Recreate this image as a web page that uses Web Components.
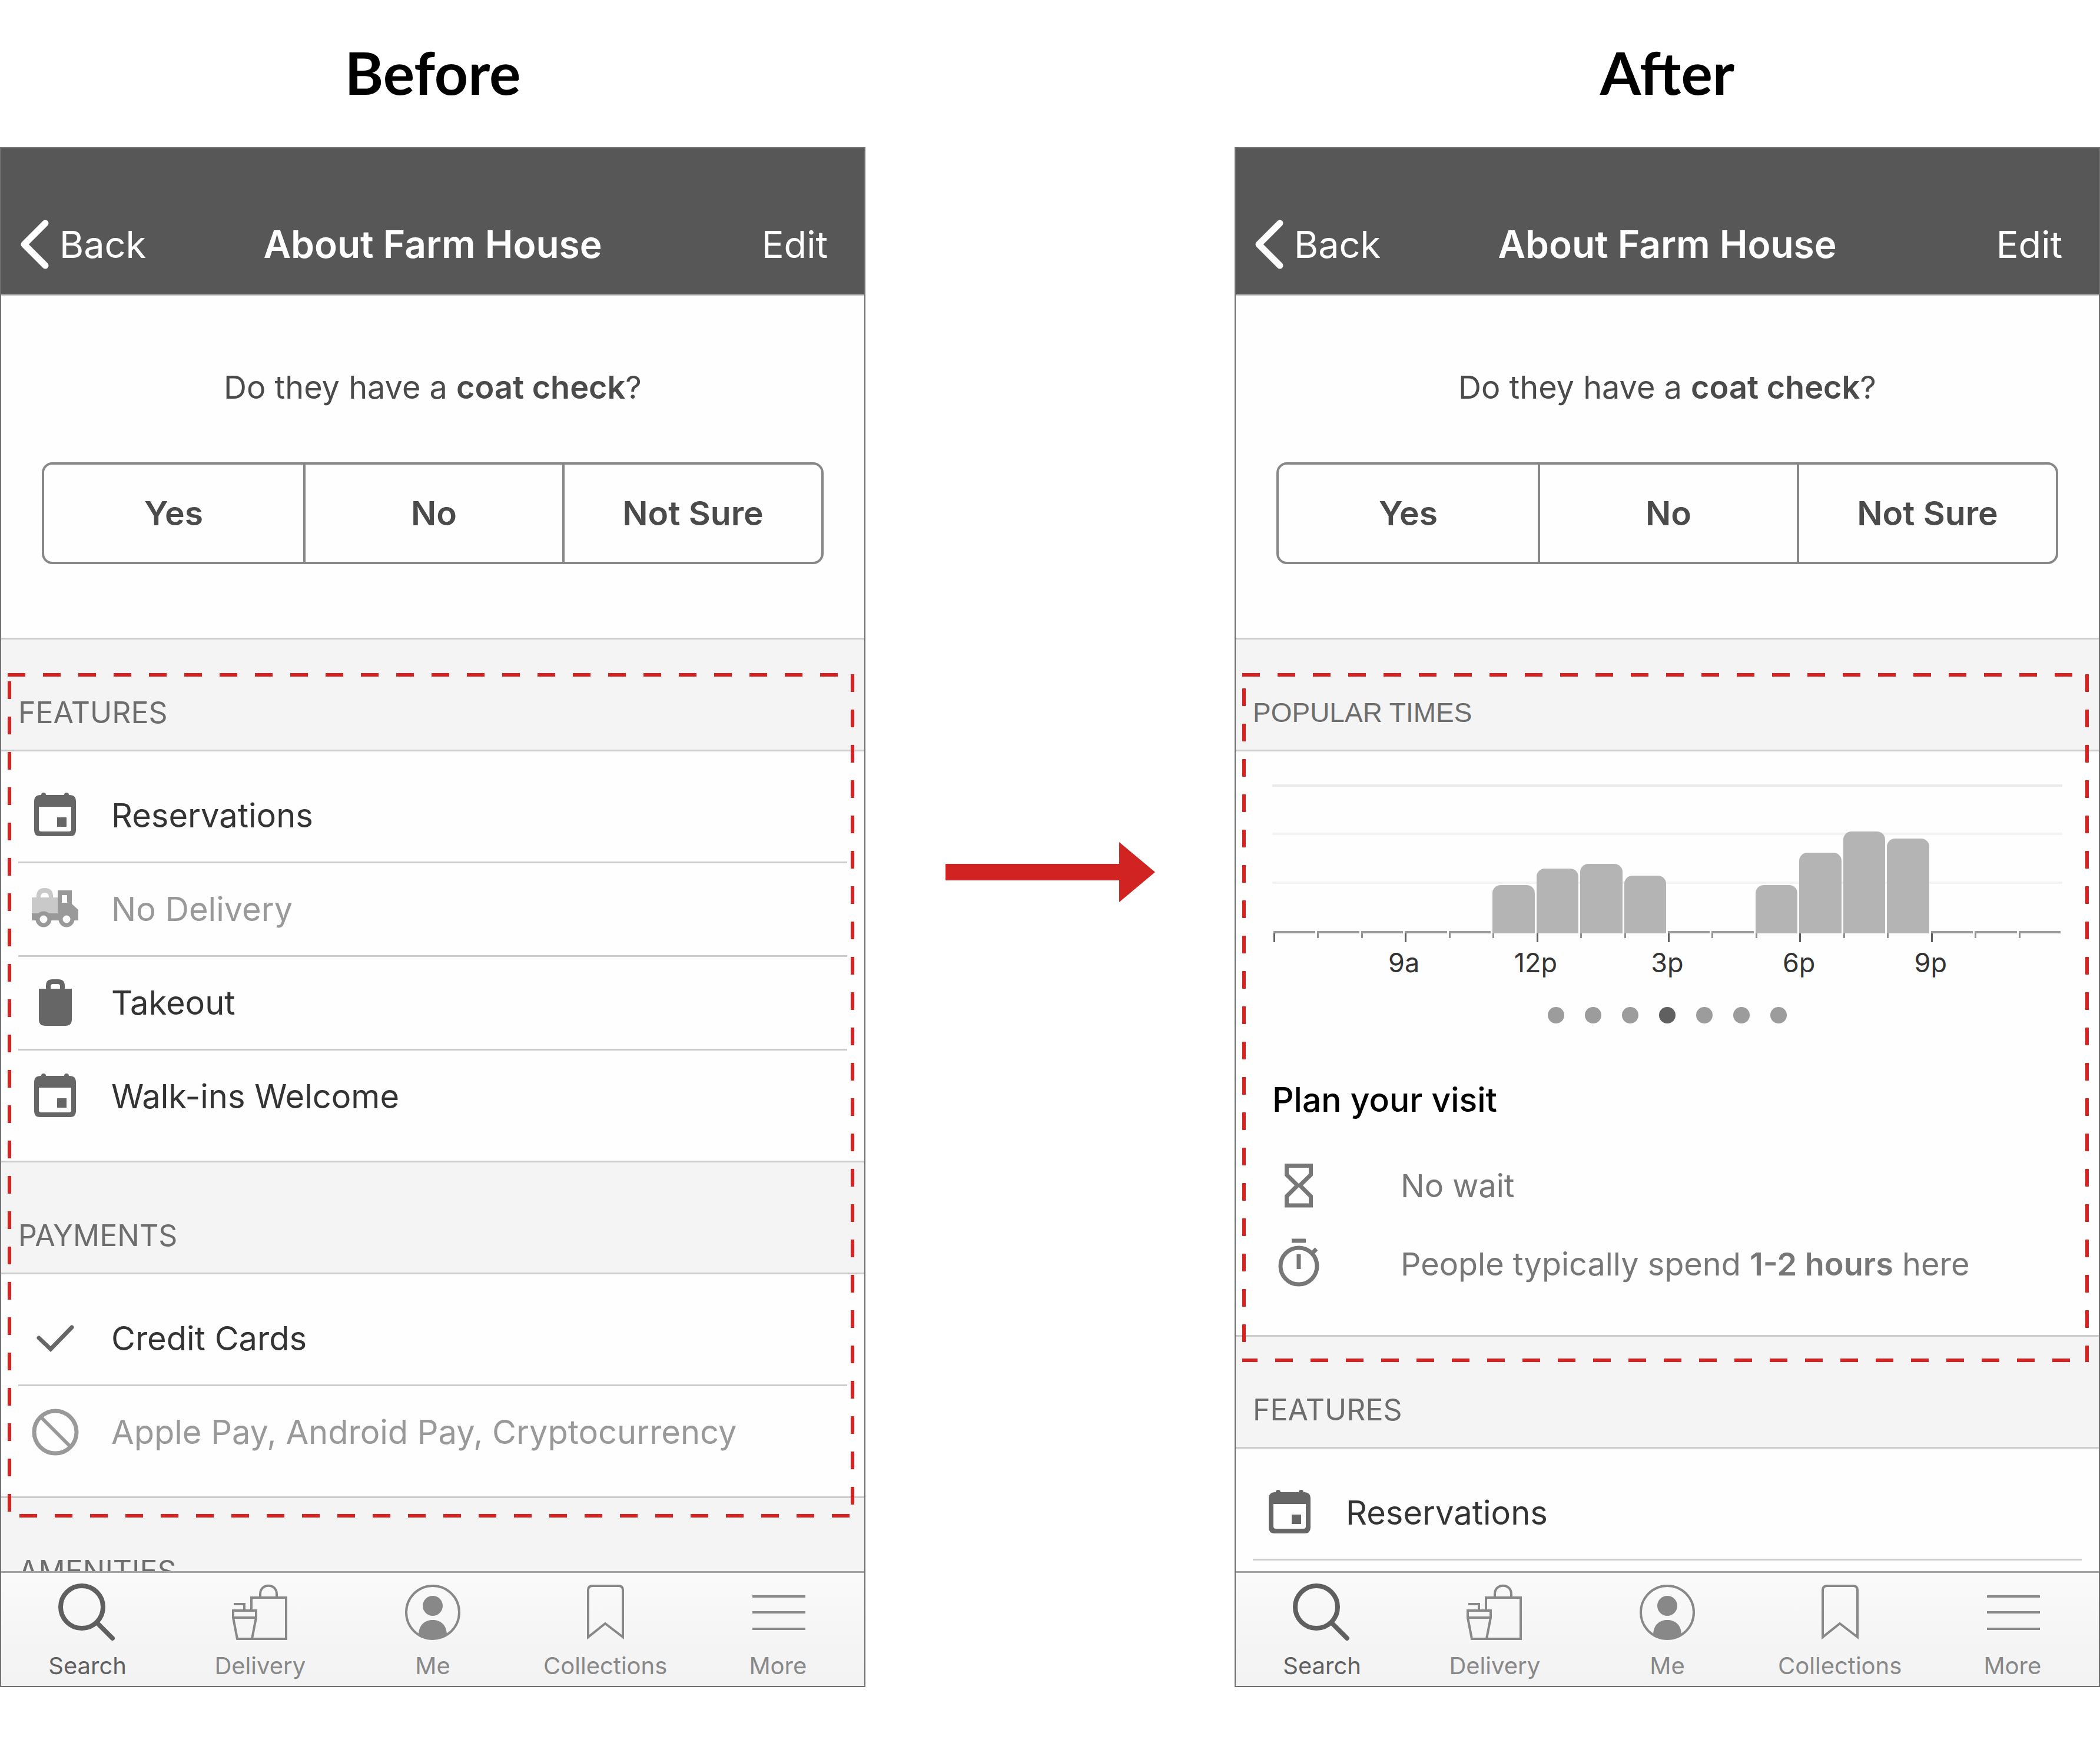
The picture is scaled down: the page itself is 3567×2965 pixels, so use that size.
<!DOCTYPE html>
<html lang="en">
<head>
<meta charset="utf-8">
<title>About Farm House: before and after</title>
<style>
body { margin: 0; background: #fff; font-family: Inter, "Liberation Sans", sans-serif; }
</style>
</head>
<body>
<compare-board>
  <phone-panel heading="Before">
    <marked-region class="tall">
      <list-section heading="FEATURES">
        <feature-row icon="calendar">Reservations</feature-row>
        <feature-row icon="truck" off>No Delivery</feature-row>
        <feature-row icon="bag">Takeout</feature-row>
        <feature-row icon="calendar">Walk-ins Welcome</feature-row>
      </list-section>
      <list-section heading="PAYMENTS">
        <feature-row icon="check">Credit Cards</feature-row>
        <feature-row icon="ban" off>Apple Pay, Android Pay, Cryptocurrency</feature-row>
      </list-section>
    </marked-region>
    <list-section heading="AMENITIES"></list-section>
  </phone-panel>
  <flow-arrow></flow-arrow>
  <phone-panel heading="After">
    <marked-region class="short">
      <list-section heading="POPULAR TIMES" class="plain">
        <popular-times></popular-times>
        <visit-plan></visit-plan>
      </list-section>
    </marked-region>
    <list-section heading="FEATURES">
      <feature-row icon="calendar">Reservations</feature-row>
      <feature-row icon="truck" off>No Delivery</feature-row>
    </list-section>
  </phone-panel>
</compare-board>

<script>
const define = (name, html, setup) => {
  const template = document.createElement('template');
  template.innerHTML = html;
  customElements.define(name, class extends HTMLElement {
    constructor() {
      super();
      this.attachShadow({ mode: 'open' }).append(template.content.cloneNode(true));
    }
    connectedCallback() { if (setup) setup(this, this.shadowRoot); }
  });
};

const icons = {
  calendar: `<g fill="#666"><circle cx="20" cy="5" r="4"/><circle cx="59" cy="5" r="4"/><path fill-rule="evenodd" d="M15 5H64Q75 5 75 16V65Q75 75 65 75H14Q4 75 4 65V16Q4 5 15 5ZM12 25V63Q12 67 16 67H63Q67 67 67 63V25ZM43 43H59V59H43Z"/></g>`,
  truck: `<path fill="#c9c9c9" fill-rule="evenodd" d="M0 20H8V18Q8 4 22 4T36 18V20H44V47H0ZM15 20H29Q29 12 22 12T15 20Z"/><path fill="#999" fill-rule="evenodd" d="M44 8H68V31L79 41V59H0V47H44ZM51 16V29H60V16Z"/><g fill="#fff" stroke="#999" stroke-width="7"><circle cx="20" cy="57" r="10"/><circle cx="59" cy="57" r="10"/></g>`,
  bag: `<path fill="#666" fill-rule="evenodd" d="M12 16H24V11Q24 0 35 0H45Q56 0 56 11V16H68V68Q68 79 57 79H23Q12 79 12 68ZM32 16H48V12Q48 8 44 8H36Q32 8 32 12Z"/>`,
  check: `<path fill="none" stroke="#666" stroke-width="7" stroke-linecap="round" d="M12 39L32 58L68 21"/>`,
  ban: `<g fill="none" stroke="#999" stroke-width="7"><circle cx="40" cy="40" r="36"/><path stroke-width="6" d="M16 15L65 64"/></g>`
};

define('compare-board', `
  <style>
    :host { display: grid; grid-template-columns: minmax(0, 1fr) 627px minmax(0, 1fr); }
  </style>
  <slot></slot>`);

define('flow-arrow', `
  <style>
    :host { display: flex; justify-content: center; padding-top: 1430px; }
    svg { width: 356px; height: 102px; }
  </style>
  <svg viewBox="0 0 356 102" aria-hidden="true"><path fill="#d22323" d="M0 37H295V0L356 51L295 102V65H0Z"/></svg>`);

define('phone-panel', `
  <style>
    :host { display: block; }
    h2 { margin: 0; height: 250px; text-align: center; font: 700 100px/244px Lato, sans-serif; color: #000; }
    .screen { box-sizing: border-box; aspect-ratio: 1470 / 2615; border: 2px solid #6f6f72; display: flex; flex-direction: column; background: #fefefe; }
    .content { flex: 1; min-height: 0; overflow: hidden; }
  </style>
  <h2></h2>
  <section class="screen">
    <nav-header></nav-header>
    <div class="content"><coat-question></coat-question><slot></slot></div>
    <tab-bar></tab-bar>
  </section>`, (host, root) => { root.querySelector('h2').textContent = host.getAttribute('heading'); });

define('nav-header', `
  <style>
    :host { display: grid; grid-template-columns: 1fr auto 1fr; align-items: center; box-sizing: border-box; height: 250px; padding: 78px 31px 0; background: #575757; border-bottom: 2px solid #c4c4c4; color: #fff; }
    h1 { margin: 0; font-size: 64px; font-weight: 600; line-height: 76px; }
    button { border: 0; padding: 0; background: none; color: inherit; font: 400 63px/76px Inter, sans-serif; display: flex; align-items: center; gap: 16px; }
    button:last-child { justify-self: end; padding-right: 31px; }
    svg { width: 52px; height: 86px; }
  </style>
  <button type="button"><svg viewBox="0 0 52 86" aria-hidden="true"><path fill="none" stroke="#fff" stroke-width="11" stroke-linecap="round" stroke-linejoin="round" d="M44 7L8 43L44 79"/></svg>Back</button>
  <h1>About Farm House</h1>
  <button type="button">Edit</button>`);

define('coat-question', `
  <style>
    :host { display: block; padding: 123px 69px 125px; color: #4a4a4a; }
    p { margin: 0 0 94px; font-size: 54px; line-height: 66px; text-align: center; }
    b { font-weight: 600; }
    .choices { display: grid; grid-template-columns: repeat(3, 1fr); box-sizing: border-box; height: 173px; border: 4px solid #878787; border-radius: 18px; }
    button { border: 0; padding: 0; background: none; color: inherit; font: 600 57px/68px Inter, sans-serif; }
    button + button { border-left: 4px solid #878787; }
  </style>
  <p>Do they have a <b>coat check</b>?</p>
  <div class="choices"><button type="button">Yes</button><button type="button">No</button><button type="button">Not Sure</button></div>`);

define('marked-region', `
  <style>
    :host { display: block; position: relative; --red: #d62322; }
    .frame { position: absolute; z-index: 1; pointer-events: none; top: 60px; left: 11px; right: 17px; bottom: var(--below);
      --h: repeating-linear-gradient(90deg, var(--red) 0 30px, transparent 30px 60px);
      --v: repeating-linear-gradient(var(--red) 0 30px, transparent 30px 60px);
      background: var(--h) 0 0 / 100% 6px, var(--h) var(--bx) 100% / 1440px 6px, var(--v) 0 var(--ly) / 6px 1500px, var(--v) 100% 2px / 6px 100%;
      background-repeat: no-repeat; }
    :host(.tall) { --below: -36px; --bx: 20px; --ly: 14px; }
    :host(.short) { --below: -46px; --bx: -4px; --ly: 26px; }
  </style>
  <slot></slot><div class="frame"></div>`);

define('list-section', `
  <style>
    :host { display: block; }
    h3 { margin: 0; padding: 94px 29px 33px; font-size: 50px; font-weight: 400; line-height: 60px; color: #6d6d6d; background: #f4f4f4; border: solid #ccc; border-width: 3px 0; }
    :host(.plain) h3 { font-family: "Liberation Sans", sans-serif; font-size: 46px; }
    .rows { padding: 31px 29px; }
    :host(.plain) .rows { padding: 56px 62px 54px; }
  </style>
  <h3></h3><div class="rows"><slot></slot></div>`, (host, root) => { root.querySelector('h3').textContent = host.getAttribute('heading'); });

define('feature-row', `
  <style>
    :host { display: flex; align-items: center; gap: 55px; height: 156px; padding-left: 23px; border-bottom: 3px solid #ccc; color: #333; font-size: 56px; line-height: 68px; }
    :host([off]) { color: #999; }
    :host(:last-child) { border-bottom: 0; }
    svg { width: 80px; height: 80px; }
  </style>
  <svg viewBox="0 0 80 80" aria-hidden="true"></svg><span><slot></slot></span>`, (host, root) => { root.querySelector('svg').innerHTML = icons[host.getAttribute('icon')]; });

define('popular-times', `
  <style>
    :host { display: block; }
    .plot, .ticks, .labels { display: grid; grid-template-columns: repeat(18, 1fr); }
    .plot, .ticks { padding-left: 2px; }
    .plot { height: 253px; align-items: end; background: linear-gradient(#ebebeb 0 0) 0 0 / 100% 4px no-repeat, linear-gradient(#f3f3f3 0 0) 0 82px / 100% 4px no-repeat, linear-gradient(#f3f3f3 0 0) 0 165px / 100% 4px no-repeat; }
    .plot i { height: 4px; margin-right: 3px; background: #9c9c9c; }
    .plot i.bar { background: #b4b4b4; border-radius: 14px 14px 0 0; }
    .ticks { height: 15px; }
    .ticks i { width: 3px; height: 8px; background: #909090; }
    .ticks i:nth-child(3n+1) { height: 15px; background: #606060; }
    .labels { margin-top: 10px; font-size: 45px; line-height: 50px; color: #333; }
    .labels span { grid-row: 1; text-align: center; }
    .dots { display: flex; justify-content: center; gap: 35px; margin-top: 50px; }
    .dots button { width: 28px; height: 28px; padding: 0; border: 0; border-radius: 50%; background: #9c9c9c; }
    .dots button[aria-current] { background: #606060; }
  </style>
  <div class="plot"></div><div class="ticks"></div><div class="labels"></div><div class="dots"></div>`, (host, root) => {
  const heights = [0, 0, 0, 0, 0, 82, 110, 118, 98, 0, 0, 82, 137, 173, 161, 0, 0, 0];
  root.querySelector('.plot').innerHTML = heights.map(h => h ? `<i class="bar" style="height:${h}px"></i>` : '<i></i>').join('');
  root.querySelector('.ticks').innerHTML = heights.map(() => '<i></i>').join('');
  root.querySelector('.labels').innerHTML = ['9a', '12p', '3p', '6p', '9p'].map((t, i) => `<span style="grid-column:${3 * i + 3} / span 2">${t}</span>`).join('');
  root.querySelector('.dots').innerHTML = ['Monday', 'Tuesday', 'Wednesday', 'Thursday', 'Friday', 'Saturday', 'Sunday'].map((d, i) => `<button type="button" aria-label="${d}"${i === 3 ? ' aria-current="true"' : ''}></button>`).join('');
});

define('visit-plan', `
  <style>
    :host { display: block; margin-top: 95px; }
    h4 { margin: 0 0 44px; font-size: 57px; font-weight: 500; line-height: 70px; color: #000; }
    .line { display: flex; align-items: center; gap: 128px; height: 133px; font-size: 54px; line-height: 66px; color: #777; }
    svg { width: 80px; height: 80px; margin: 0 5px; overflow: visible; }
    p { margin: 0; }
    b { font-weight: 600; }
  </style>
  <h4>Plan your visit</h4>
  <div class="line"><svg viewBox="0 0 80 80" aria-hidden="true"><path fill="none" stroke="#777" stroke-width="7" d="M19.500 5.500H60.500V21L42 39L60.500 57.500V73H19.500V57.500L38 39L19.500 21Z"/></svg><p>No wait</p></div>
  <div class="line"><svg viewBox="0 0 80 80" aria-hidden="true"><g fill="none" stroke="#777" stroke-width="7"><circle cx="40" cy="43" r="31"/><path d="M28 0H52M40 23V48M61 23L70 14"/></g></svg><p>People typically spend <b>1-2 hours</b> here</p></div>`);

define('tab-bar', `
  <style>
    :host { display: grid; grid-template-columns: repeat(5, 1fr); border-top: 3px solid #a3a3a3; background: linear-gradient(#fafafa, #f2f2f2); }
    a { display: flex; flex-direction: column; align-items: center; gap: 18px; padding: 16px 0 10px; color: #888; text-decoration: none; font-size: 40px; line-height: 48px; }
    a[aria-current] { color: #5f5f5f; }
    svg { width: 100px; height: 100px; fill: none; stroke: currentColor; stroke-width: 4px; }
    svg.heavy { stroke-width: 8px; }
  </style>
  <a href="#search" aria-current="page"><svg class="heavy" viewBox="0 0 100 100"><circle cx="40" cy="42" r="36"/><path stroke-linecap="round" d="M66 69L92 95"/></svg>Search</a>
  <a href="#delivery"><svg viewBox="0 0 100 100"><path d="M35 48V26H94V96H11L4 60V48H43V60L36 96M4 60H43M5 37H23V48M50 26V20C50 1 78 1 78 20V26"/></svg>Delivery</a>
  <a href="#me"><svg viewBox="0 0 100 100"><circle cx="50" cy="51" r="45"/><g fill="currentColor" stroke="none"><circle cx="50" cy="40" r="17"/><path d="M26 90C26 71 38 64 50 64S74 71 74 90A46 46 0 0 1 26 90Z"/></g></svg>Me</a>
  <a href="#collections"><svg viewBox="0 0 100 100"><path d="M21 93V13Q21 6 29 6H72Q80 6 80 13V93L50 70Z"/></svg>Collections</a>
  <a href="#more"><svg viewBox="0 0 100 100"><path d="M7 24H97M7 51H97M7 79H97"/></svg>More</a>`);
</script>
</body>
</html>
